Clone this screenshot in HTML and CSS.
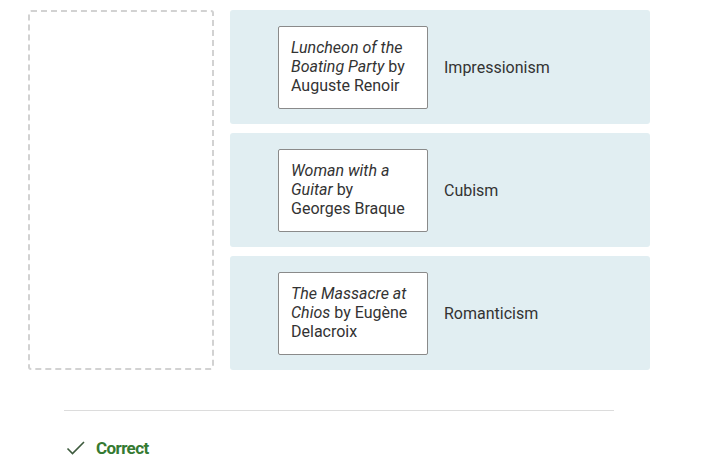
FILE: index.html
```html
<!DOCTYPE html>
<html>
<head>
<meta charset="utf-8">
<link rel="stylesheet" href="styles.css">
</head>
<body>
<div class="page">
  <div class="board">
    <div class="pool"></div>
    <div class="rows">
      <div class="row">
        <div class="card"><i>Luncheon of the Boating Party</i> by Auguste Renoir</div>
        <div class="label">Impressionism</div>
      </div>
      <div class="row">
        <div class="card"><i>Woman with a Guitar</i> by Georges Braque</div>
        <div class="label">Cubism</div>
      </div>
      <div class="row">
        <div class="card"><i>The Massacre at Chios</i> by Eugène Delacroix</div>
        <div class="label">Romanticism</div>
      </div>
    </div>
  </div>
  <div class="sep"></div>
  <div class="result">
    <svg class="check" width="20" height="16" viewBox="0 0 20 16"><path d="M1.5 8.5 L6.5 13.5 L18 2" fill="none" stroke="#3d5a3d" stroke-width="1.6"/></svg>
    <span class="status">Correct</span>
  </div>
</div>
</body>
</html>
```
FILE: styles.css
```css
html, body { margin: 0; padding: 0; background: #fff; }
body { font-family: Roboto, "Liberation Sans", sans-serif; color: #333; }
.page { padding: 10px 0 0 28px; }
.board { display: flex; gap: 16px; align-items: stretch; }
.pool { width: 182px; border: 2px dashed #d2d2d2; border-radius: 3px; }
.rows { width: 420px; display: flex; flex-direction: column; gap: 9px; }
.row { height: 114px; background: #e1eef2; border-radius: 3px; display: flex; align-items: center; padding-left: 48px; box-sizing: border-box; }
.card { width: 150px; height: 83px; box-sizing: border-box; background: #fff; border: 1px solid #8a8a8a; border-radius: 2px; padding: 11px 16px 0 12px; font-size: 16px; line-height: 19px; color: #333; }
.card i { font-style: italic; }
.label { margin-left: 16px; font-size: 16px; color: #333; }
.sep { margin: 40px 0 0 36px; width: 550px; height: 1px; background: #dcdcdc; }
.result { display: flex; align-items: center; margin: 27px 0 0 38px; }
.check { margin-right: 10px; }
.status { font-size: 17px; font-weight: bold; color: #357a32; letter-spacing: -0.6px; }
```
